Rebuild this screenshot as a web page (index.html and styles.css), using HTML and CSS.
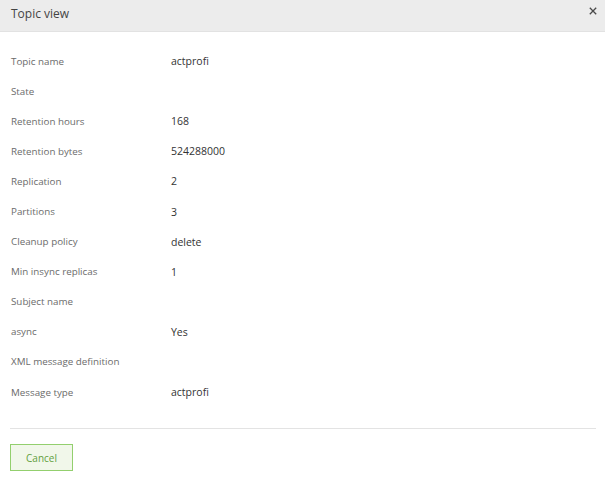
FILE: index.html
```html
<!DOCTYPE html>
<html>
<head>
<meta charset="utf-8">
<link rel="stylesheet" href="styles.css">
</head>
<body>
<div class="modal">
  <div class="modal-header">
    <span class="modal-title">Topic view</span>
    <svg class="modal-close" width="8" height="8" viewBox="0 0 8 8"><path d="M0.8 0.8 L7.2 7.2 M7.2 0.8 L0.8 7.2" stroke="#4a4a4a" stroke-width="1.3" fill="none"/></svg>
  </div>
  <div class="modal-body">
    <div class="row"><div class="label">Topic name</div><div class="value">actprofi</div></div>
    <div class="row"><div class="label">State</div><div class="value"></div></div>
    <div class="row"><div class="label">Retention hours</div><div class="value">168</div></div>
    <div class="row"><div class="label">Retention bytes</div><div class="value">524288000</div></div>
    <div class="row"><div class="label">Replication</div><div class="value">2</div></div>
    <div class="row"><div class="label">Partitions</div><div class="value">3</div></div>
    <div class="row"><div class="label">Cleanup policy</div><div class="value">delete</div></div>
    <div class="row"><div class="label">Min insync replicas</div><div class="value">1</div></div>
    <div class="row"><div class="label">Subject name</div><div class="value"></div></div>
    <div class="row"><div class="label">async</div><div class="value">Yes</div></div>
    <div class="row"><div class="label">XML message definition</div><div class="value"></div></div>
    <div class="row"><div class="label">Message type</div><div class="value">actprofi</div></div>
  </div>
  <div class="modal-footer">
    <button class="btn-cancel">Cancel</button>
  </div>
</div>
</body>
</html>
```
FILE: styles.css
```css
html, body {
  margin: 0;
  padding: 0;
  background: #ffffff;
}
body {
  font-family: "Open Sans", "DejaVu Sans", sans-serif;
  width: 605px;
  height: 479px;
  overflow: hidden;
}
.modal {
  display: flex;
  flex-direction: column;
}
.modal-header {
  height: 31px;
  background: #ececec;
  border-bottom: 1px solid #e2e2e2;
  display: flex;
  align-items: center;
  justify-content: space-between;
  padding: 0 8px 0 11px;
  box-sizing: content-box;
}
.modal-title {
  font-size: 12px;
  color: #444;
  margin-top: -5px;
}
.modal-close {
  display: block;
  margin-top: -10px;
}
.modal-body {
  padding: 14px 0 0 11px;
  display: flex;
  flex-direction: column;
}
.row {
  display: flex;
  align-items: center;
  height: 30.1px;
}
.label {
  width: 160px;
  font-size: 9.8px;
  color: #6b6b6b;
}
.value {
  font-size: 10.5px;
  color: #333;
}
.modal-footer {
  margin: 21px 9px 0 10px;
  border-top: 1px solid #e3e3e3;
  padding-top: 15px;
}
.btn-cancel {
  width: 63px;
  height: 27px;
  background: #f1f7ea;
  border: 1px solid #93cf6e;
  color: #62a03e;
  font-family: "Open Sans", "DejaVu Sans", sans-serif;
  font-size: 10px;
  padding: 0;
  cursor: pointer;
}
```
